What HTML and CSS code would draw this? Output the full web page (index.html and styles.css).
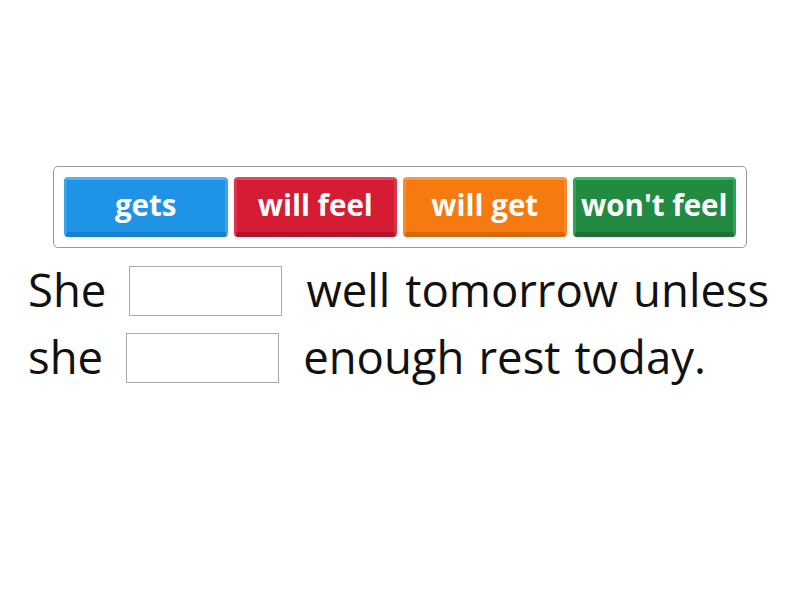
FILE: index.html
```html
<!DOCTYPE html>
<html>
<head>
<meta charset="utf-8">
<link rel="stylesheet" href="styles.css">
</head>
<body>
<div class="page">
  <div class="bank">
    <div class="tile blue">gets</div>
    <div class="tile red">will feel</div>
    <div class="tile orange">will get</div>
    <div class="tile green">won't feel</div>
  </div>
  <div class="sentence">
    <div class="line l1">
      <span class="word">She</span>
      <span class="gap"></span>
      <span class="word">well</span>
      <span class="word">tomorrow</span>
      <span class="word">unless</span>
    </div>
    <div class="line l2">
      <span class="word">she</span>
      <span class="gap"></span>
      <span class="word">enough</span>
      <span class="word">rest</span>
      <span class="word">today.</span>
    </div>
  </div>
</div>
</body>
</html>
```
FILE: styles.css
```css
html, body {
  margin: 0;
  padding: 0;
  background: #ffffff;
}
body {
  width: 800px;
  height: 600px;
  font-family: "Open Sans", sans-serif;
}
.page {
  padding-top: 166px;
}
.bank {
  margin-left: 53px;
  width: 694px;
  height: 82px;
  box-sizing: border-box;
  border: 1px solid #999999;
  border-radius: 5px;
  padding: 10px;
  display: flex;
  gap: 6px;
}
.tile {
  width: 164px;
  height: 60px;
  box-sizing: border-box;
  border-radius: 4px;
  color: #ffffff;
  font-weight: 700;
  font-size: 29.5px;
  display: flex;
  align-items: center;
  justify-content: center;
  border-style: solid;
  border-width: 3px 3px 5px 3px;
  padding-bottom: 4px;
}
.blue {
  background: #1f93e6;
  border-color: #52b1f2 #3aa3ec #1680d0 #3aa3ec;
}
.red {
  background: #d51c34;
  border-color: #e2485c #dc3349 #b5152a #dc3349;
}
.orange {
  background: #f57a10;
  border-color: #f99642 #f78a2c #d9680a #f78a2c;
}
.green {
  background: #238a42;
  border-color: #2dbf60 #2aa853 #1c7136 #2aa853;
}
.sentence {
  font-size: 45.5px;
  color: #111111;
}
.line {
  display: flex;
  align-items: center;
  height: 50px;
  padding-left: 28px;
}
.l1 {
  margin-top: 18px;
}
.l2 {
  margin-top: 17px;
}
.word {
  line-height: 50px;
  padding-bottom: 4px;
}
.l1 .word {
  margin-right: 15px;
}
.l2 .word {
  margin-right: 14px;
}
.gap {
  width: 151px;
  height: 48px;
  border: 1px solid #aaaaaa;
}
.l1 .gap {
  margin-left: 8px;
  margin-right: 24px;
}
.l2 .gap {
  margin-left: 9px;
  margin-right: 24px;
}
```
